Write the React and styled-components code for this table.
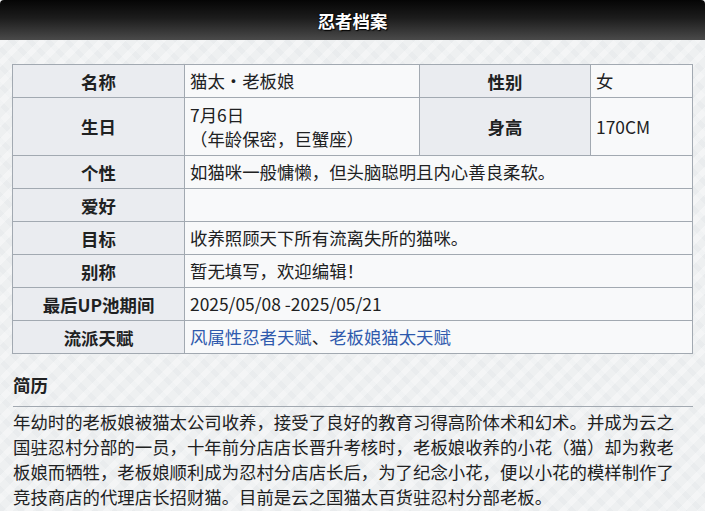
import React from "react";
import styled, { createGlobalStyle } from "styled-components";

const Global = createGlobalStyle`
  html, body { margin: 0; padding: 0; }
  body {
    background-color: #eef0f1;
    background-image:
      repeating-linear-gradient(135deg, rgba(255,255,255,0.35) 0 6px, rgba(0,0,0,0) 6px 14px),
      repeating-linear-gradient(45deg, rgba(220,224,228,0.25) 0 5px, rgba(0,0,0,0) 5px 13px);
    font-family: "Noto Sans CJK SC", "Noto Sans", sans-serif;
    color: #202122;
    width: 705px;
    height: 511px;
    overflow: hidden;
  }
`;

const TitleBar = styled.div`
  height: 40px;
  background: linear-gradient(to bottom, #050505 0%, #1c1c1c 45%, #4a4a4a 100%);
  border-radius: 4px 4px 0 0;
  display: flex;
  align-items: center;
  justify-content: center;
  color: #fff;
  font-weight: 700;
  font-size: 17.4px;
  text-shadow: 0 0 2px #000, 1px 1px 1px #000;
`;

const Content = styled.div`
  padding: 24px 12px 0 12px;
`;

const Table = styled.table`
  width: 680px;
  border-collapse: collapse;
  font-size: 17.4px;
  table-layout: fixed;
`;

const Label = styled.th`
  background: #eaecf0;
  border: 1px solid #a2a9b1;
  font-weight: 700;
  text-align: center;
  padding: 0 4px;
  height: ${(p) => p.$h || 32}px;
  box-sizing: border-box;
`;

const Value = styled.td`
  background: #f8f9fa;
  border: 1px solid #a2a9b1;
  padding: 0 5px;
  height: ${(p) => p.$h || 32}px;
  line-height: 24px;
  vertical-align: middle;
`;

const Link = styled.a`
  color: #2f5aad;
  text-decoration: none;
`;

const Heading = styled.h2`
  margin: 19px 0 0 1px;
  font-size: 17.4px;
  font-weight: 700;
  line-height: 24px;
  padding-bottom: 9px;
  border-bottom: 1px solid #a2a9b1;
`;

const Para = styled.p`
  margin: 0;
  padding: 0 0 0 1px;
  width: 676px;
  font-size: 17.4px;
  line-height: 25px;
  margin-top: 2px;
`;

export default function App() {
  return (
    <>
      <Global />
      <TitleBar>忍者档案</TitleBar>
      <Content lang="zh-CN">
        <Table>
          <colgroup>
            <col style={{ width: 172 }} />
            <col style={{ width: 235 }} />
            <col style={{ width: 171 }} />
            <col style={{ width: 102 }} />
          </colgroup>
          <tbody>
            <tr>
              <Label $h={32}>名称</Label>
              <Value $h={32}>猫太・老板娘</Value>
              <Label $h={32}>性别</Label>
              <Value $h={32}>女</Value>
            </tr>
            <tr>
              <Label $h={57}>生日</Label>
              <Value $h={57}>
                7月6日
                <br />
                （年龄保密，巨蟹座）
              </Value>
              <Label $h={57}>身高</Label>
              <Value $h={57}>170CM</Value>
            </tr>
            <tr>
              <Label>个性</Label>
              <Value colSpan={3}>如猫咪一般慵懒，但头脑聪明且内心善良柔软。</Value>
            </tr>
            <tr>
              <Label>爱好</Label>
              <Value colSpan={3}></Value>
            </tr>
            <tr>
              <Label>目标</Label>
              <Value colSpan={3}>收养照顾天下所有流离失所的猫咪。</Value>
            </tr>
            <tr>
              <Label>别称</Label>
              <Value colSpan={3}>暂无填写，欢迎编辑！</Value>
            </tr>
            <tr>
              <Label>最后UP池期间</Label>
              <Value colSpan={3}>2025/05/08 -2025/05/21</Value>
            </tr>
            <tr>
              <Label>流派天赋</Label>
              <Value colSpan={3}>
                <Link href="#">风属性忍者天赋</Link>、<Link href="#">老板娘猫太天赋</Link>
              </Value>
            </tr>
          </tbody>
        </Table>
        <Heading>简历</Heading>
        <Para>
          年幼时的老板娘被猫太公司收养，接受了良好的教育习得高阶体术和幻术。并成为云之国驻忍村分部的一员，十年前分店店长晋升考核时，老板娘收养的小花（猫）却为救老板娘而牺牲，老板娘顺利成为忍村分店店长后，为了纪念小花，便以小花的模样制作了竞技商店的代理店长招财猫。目前是云之国猫太百货驻忍村分部老板。
        </Para>
      </Content>
    </>
  );
}
